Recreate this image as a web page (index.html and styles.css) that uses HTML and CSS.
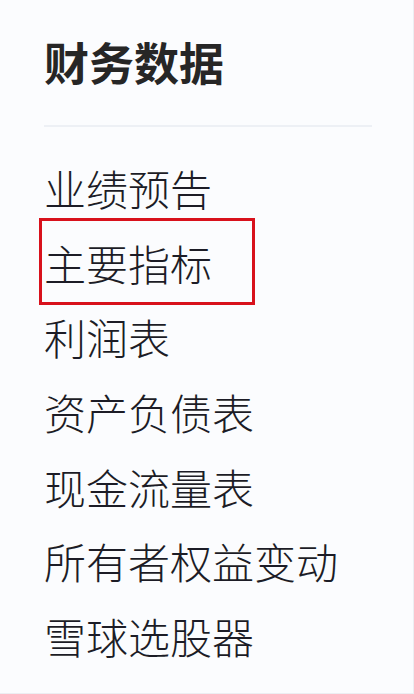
FILE: index.html
```html
<!DOCTYPE html>
<html lang="zh-CN">
<head>
<meta charset="utf-8">
<title>财务数据</title>
<link rel="stylesheet" href="styles.css">
</head>
<body>
<div class="panel">
  <h2 class="title">财务数据</h2>
  <div class="divider"></div>
  <ul class="menu">
    <li class="item">业绩预告</li>
    <li class="item marked">主要指标</li>
    <li class="item">利润表</li>
    <li class="item">资产负债表</li>
    <li class="item">现金流量表</li>
    <li class="item">所有者权益变动</li>
    <li class="item">雪球选股器</li>
  </ul>
</div>
</body>
</html>
```
FILE: styles.css
```css
html, body {
  margin: 0;
  padding: 0;
  background: #fbfcfe;
}
body {
  font-family: "Noto Sans CJK SC", "Noto Sans", sans-serif;
  color: #1c1c24;
}
.panel {
  box-sizing: border-box;
  width: 414px;
  height: 694px;
  padding: 30px 41px 0 44px;
  border-right: 1px solid #eceef2;
  border-bottom: 1px solid #eceef2;
  overflow: hidden;
}
.title {
  margin: 0;
  font-size: 45px;
  line-height: 64px;
  font-weight: 700;
  color: #262626;
  letter-spacing: 0;
}
.divider {
  height: 2px;
  background: #edf0f5;
  margin-top: 31px;
}
.menu {
  list-style: none;
  margin: 24px 0 0 0;
  padding: 0;
}
.item {
  font-size: 42px;
  font-weight: 300;
  line-height: 74.7px;
  height: 74.7px;
  white-space: nowrap;
  position: relative;
  color: #1c1c26;
}
.marked::after {
  content: "";
  position: absolute;
  left: -5px;
  top: -8px;
  width: 210px;
  height: 81px;
  border: 3px solid #d8111c;
}
```
